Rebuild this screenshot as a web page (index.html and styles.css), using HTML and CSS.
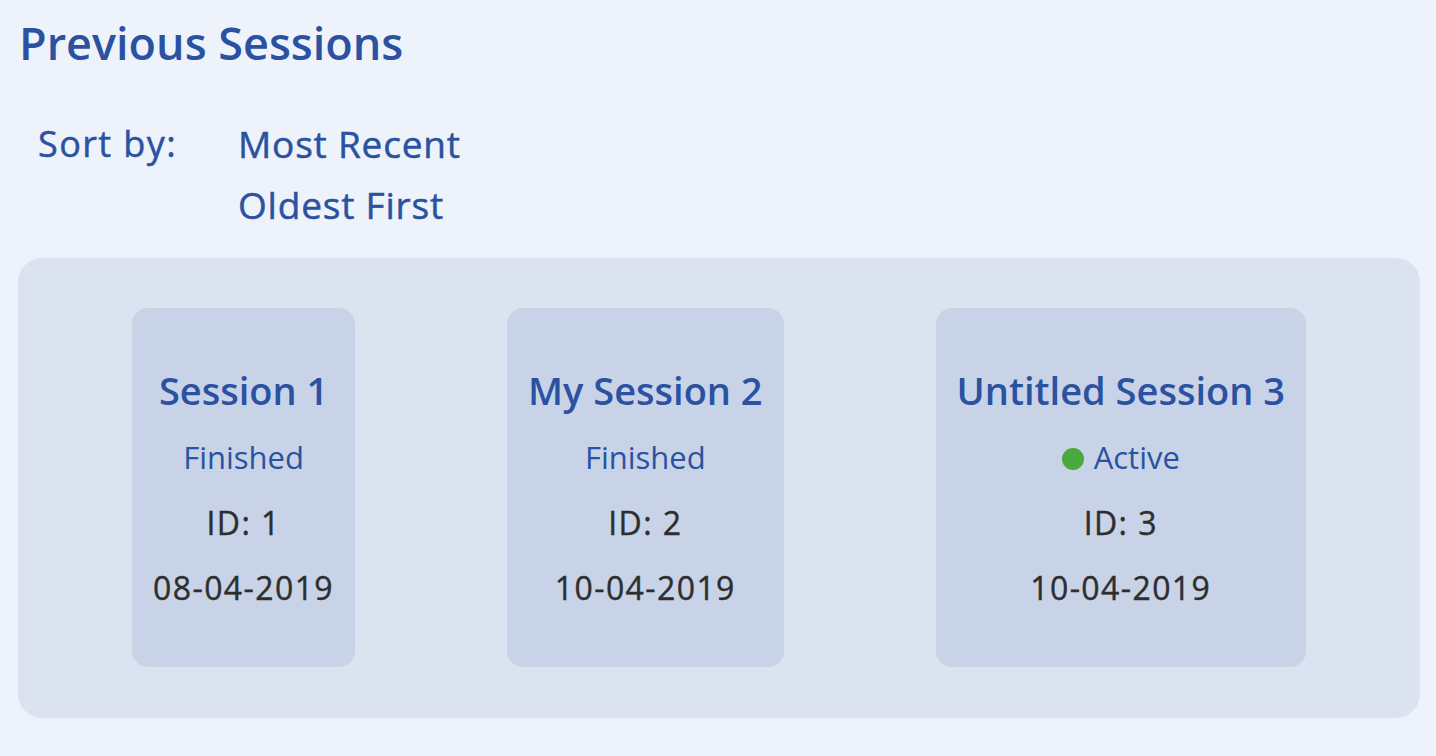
FILE: index.html
```html
<!DOCTYPE html>
<html lang="en">
<head>
<meta charset="utf-8">
<title>Previous Sessions</title>
<link rel="stylesheet" href="styles.css">
</head>
<body>
<main class="page">
  <h1 class="title">Previous Sessions</h1>
  <div class="sort">
    <span class="sort-label">Sort by:</span>
    <ul class="sort-options">
      <li>Most Recent</li>
      <li>Oldest First</li>
    </ul>
  </div>
  <section class="sessions">
    <article class="card">
      <h2 class="card-title">Session 1</h2>
      <p class="status">Finished</p>
      <p class="meta">ID: 1</p>
      <p class="meta">08-04-2019</p>
    </article>
    <article class="card">
      <h2 class="card-title">My Session 2</h2>
      <p class="status">Finished</p>
      <p class="meta">ID: 2</p>
      <p class="meta">10-04-2019</p>
    </article>
    <article class="card">
      <h2 class="card-title">Untitled Session 3</h2>
      <p class="status"><span class="dot"></span>Active</p>
      <p class="meta">ID: 3</p>
      <p class="meta">10-04-2019</p>
    </article>
  </section>
</main>
</body>
</html>
```

FILE: styles.css
```css
html, body {
  margin: 0;
  padding: 0;
  background: #eef3fb;
}
body {
  font-family: "Open Sans", "Noto Sans", sans-serif;
  color: #2a52a1;
}
.page {
  padding: 15px 16px 0 18px;
}
.title {
  margin: 0 0 0 1px;
  font-size: 45px;
  line-height: 56px;
  font-weight: 600;
  color: #2a52a1;
}
.sort {
  display: flex;
  margin-top: 42px;
  padding-left: 20px;
}
.sort-label {
  width: 200px;
  font-size: 36px;
  line-height: 61px;
  font-weight: 400;
  letter-spacing: 1.4px;
  -webkit-text-stroke: 0.5px #2a52a1;
}
.sort-options {
  list-style: none;
  margin: 0;
  padding: 0;
  font-size: 37px;
  line-height: 61px;
  font-weight: 400;
  letter-spacing: 0.8px;
  -webkit-text-stroke: 0.5px #2a52a1;
}
.sessions {
  margin-top: 23px;
  display: flex;
  justify-content: center;
  gap: 152px;
  padding: 50px 0 51px;
  background: #dbe2f0;
  border-radius: 24px;
}
.card {
  background: #c8d3e8;
  border-radius: 16px;
  padding: 48px 21px 47px;
  text-align: center;
}
.card-title {
  margin: 0;
  font-size: 38px;
  line-height: 69px;
  font-weight: 600;
  white-space: nowrap;
}
.status {
  margin: 0;
  font-size: 31px;
  line-height: 65px;
  font-weight: 400;
  color: #2a52a1;
}
.meta {
  margin: 0;
  font-size: 32px;
  line-height: 65px;
  font-weight: 400;
  letter-spacing: 1.4px;
  color: #2e2e2e;
  -webkit-text-stroke: 0.4px #2e2e2e;
}
.dot {
  display: inline-block;
  width: 22px;
  height: 22px;
  border-radius: 50%;
  background: #4aa83d;
  margin-right: 10px;
  vertical-align: -1px;
}
```
